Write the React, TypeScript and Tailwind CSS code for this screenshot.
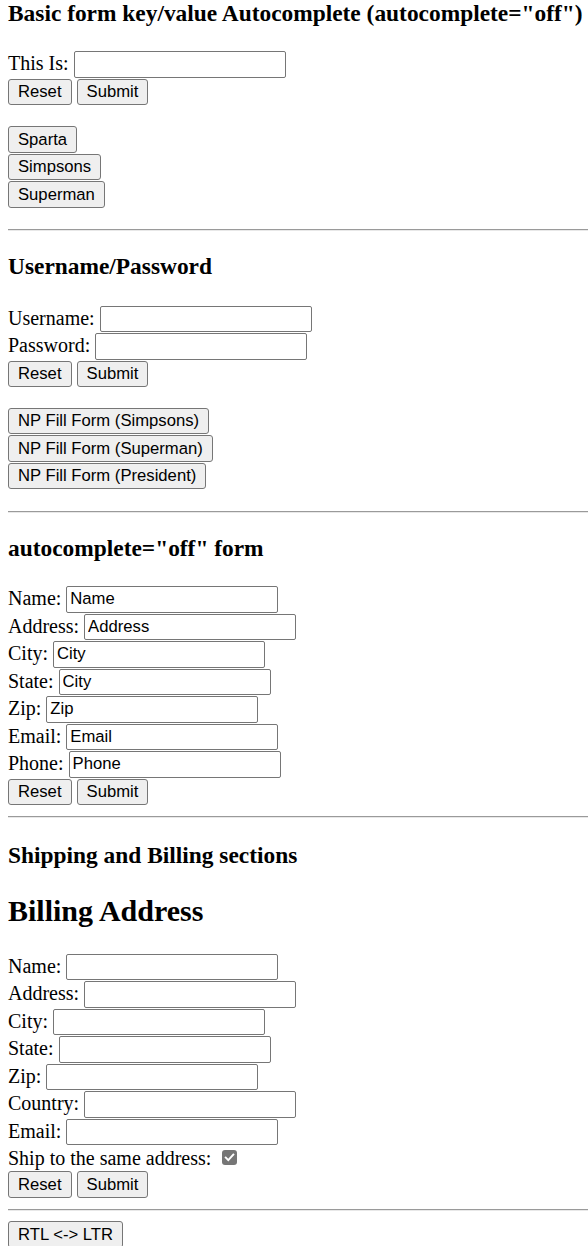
import React from "react";

const inputCls =
  "block w-[212px] h-[26.5px] border border-[#767676] rounded-[2px] bg-white px-[3px] font-['Liberation_Sans',Arial,sans-serif] text-[16.67px] text-black outline-none";
const btnCls =
  "block h-[26.67px] px-[9px] border border-[#767676] rounded-[3px] bg-[#efefef] font-['Liberation_Sans',Arial,sans-serif] text-[16.67px] leading-[19px] text-black whitespace-nowrap";

function Field({ label, value }: { label: string; value?: string }) {
  return (
    <div className="flex h-[27.5px] items-start whitespace-nowrap">
      <span className="pt-[1px] leading-[23px]">{label}</span>
      <input className={`${inputCls} ml-[5px]`} defaultValue={value ?? ""} />
    </div>
  );
}

function Btn({ children }: { children: React.ReactNode }) {
  return <button className={btnCls}>{children}</button>;
}

function ButtonsRow() {
  return (
    <div className="flex h-[27.5px] items-start gap-[5px]">
      <Btn>Reset</Btn>
      <Btn>Submit</Btn>
    </div>
  );
}

function OneBtn({ children }: { children: React.ReactNode }) {
  return (
    <div className="flex h-[27.5px] items-start">
      <Btn>{children}</Btn>
    </div>
  );
}

function Hr({ mt }: { mt: string }) {
  return (
    <div
      className={`${mt} h-[2px] border-t border-b border-t-[#9a9a9a] border-b-[#e8e8e8]`}
    />
  );
}

export default function App() {
  return (
    <div className="h-[1246px] overflow-hidden bg-white pl-[8px] font-['Liberation_Serif','Times_New_Roman',serif] text-[20px] text-black">
      <h3 className="text-[23.4px] font-bold leading-[27px] whitespace-nowrap">
        Basic form key/value Autocomplete (autocomplete="off")
      </h3>
      <div className="mt-[24px]">
        <Field label="This Is:" />
        <ButtonsRow />
      </div>
      <div className="mt-[20px]">
        <OneBtn>Sparta</OneBtn>
        <OneBtn>Simpsons</OneBtn>
        <OneBtn>Superman</OneBtn>
      </div>
      <Hr mt="mt-[20px]" />

      <h3 className="mt-[22.5px] text-[23.4px] font-bold leading-[27px] whitespace-nowrap">
        Username/Password
      </h3>
      <div className="mt-[25.5px]">
        <Field label="Username:" />
        <Field label="Password:" />
        <ButtonsRow />
      </div>
      <div className="mt-[19.5px]">
        <OneBtn>NP Fill Form (Simpsons)</OneBtn>
        <OneBtn>NP Fill Form (Superman)</OneBtn>
        <OneBtn>NP Fill Form (President)</OneBtn>
      </div>
      <Hr mt="mt-[20.5px]" />

      <h3 className="mt-[22px] text-[23.4px] font-bold leading-[27px] whitespace-nowrap">
        autocomplete="off" form
      </h3>
      <div className="mt-[24.5px]">
        <Field label="Name:" value="Name" />
        <Field label="Address:" value="Address" />
        <Field label="City:" value="City" />
        <Field label="State:" value="City" />
        <Field label="Zip:" value="Zip" />
        <Field label="Email:" value="Email" />
        <Field label="Phone:" value="Phone" />
        <ButtonsRow />
      </div>
      <Hr mt="mt-[10px]" />

      <h3 className="mt-[23.5px] text-[23.4px] font-bold leading-[27px] whitespace-nowrap">
        Shipping and Billing sections
      </h3>
      <h2 className="mt-[25.5px] text-[30px] font-bold leading-[34px] whitespace-nowrap">
        Billing Address
      </h2>
      <div className="mt-[25.5px]">
        <Field label="Name:" />
        <Field label="Address:" />
        <Field label="City:" />
        <Field label="State:" />
        <Field label="Zip:" />
        <Field label="Country:" />
        <Field label="Email:" />
        <div className="flex h-[25px] items-start whitespace-nowrap">
          <span className="pt-[1px] leading-[23px]">Ship to the same address:</span>
          <span className="ml-[10.5px] mt-[3.5px] flex h-[15px] w-[15px] items-center justify-center rounded-[3px] bg-[#767676]">
            <svg width="11" height="11" viewBox="0 0 11 11">
              <path
                d="M1.8 5.6 L4.3 8.1 L9.3 2.6"
                fill="none"
                stroke="white"
                strokeWidth="2"
                strokeLinecap="square"
              />
            </svg>
          </span>
        </div>
        <ButtonsRow />
      </div>
      <Hr mt="mt-[10.5px]" />
      <div className="mt-[10px]">
        <OneBtn>RTL &lt;-&gt; LTR</OneBtn>
      </div>
    </div>
  );
}
